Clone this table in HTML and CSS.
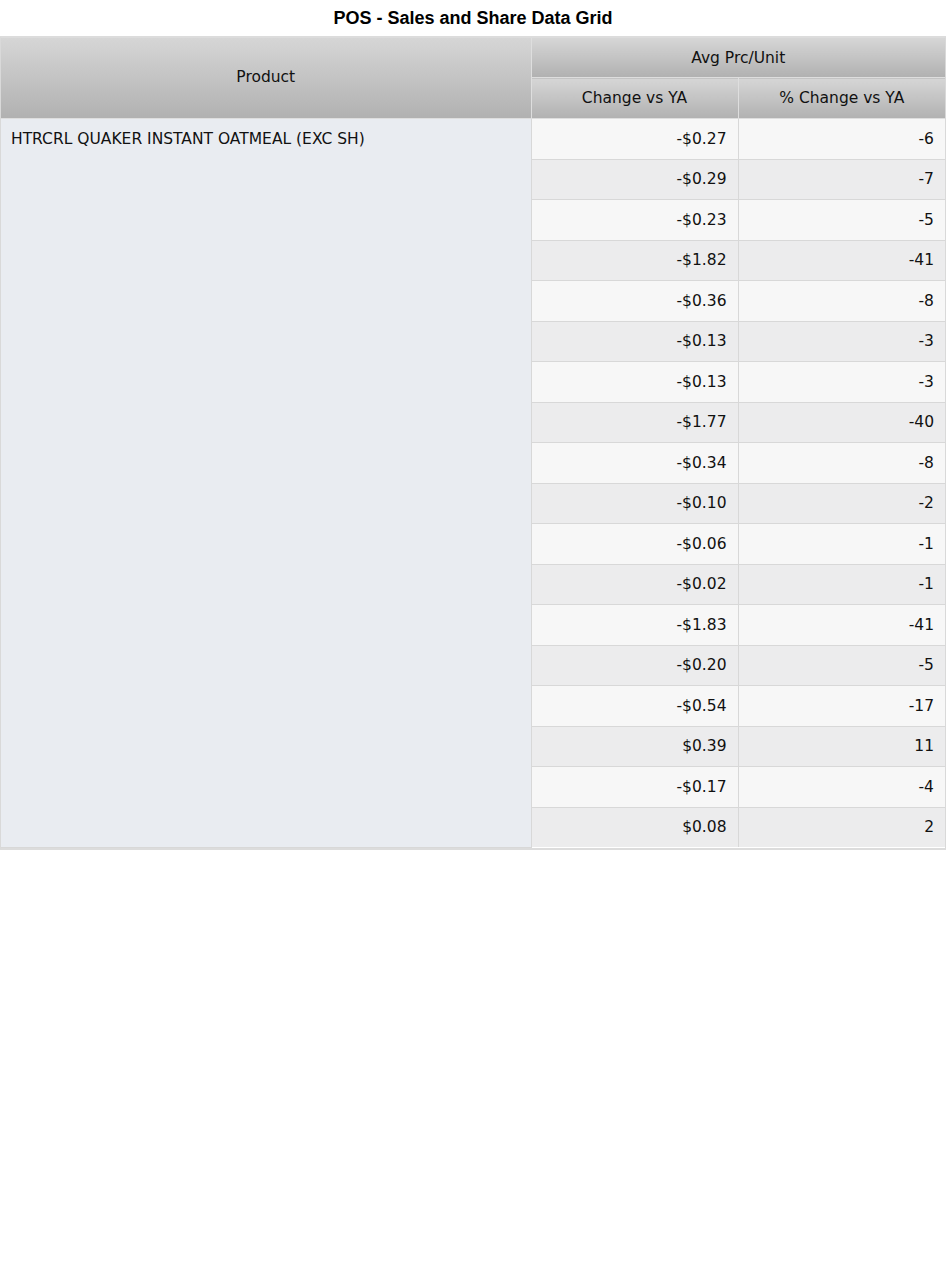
FILE: index.html
```html
<!DOCTYPE html>
<html>
<head>
<meta charset="utf-8">
<link rel="stylesheet" href="styles.css">
</head>
<body>
<h1 class="title">POS - Sales and Share Data Grid</h1>
<div class="grid-wrap">
<table class="grid">
<colgroup><col class="c-prod"><col class="c-val"><col class="c-val"></colgroup>
<thead>
<tr><th rowspan="2" class="h-prod">Product</th><th colspan="2" class="h-top">Avg Prc/Unit</th></tr>
<tr><th class="h-sub">Change vs YA</th><th class="h-sub">% Change vs YA</th></tr>
</thead>
<tbody>
<tr class="odd"><td rowspan="18" class="prod">HTRCRL QUAKER INSTANT OATMEAL (EXC SH)</td><td>-$0.27</td><td>-6</td></tr>
<tr class="even"><td>-$0.29</td><td>-7</td></tr>
<tr class="odd"><td>-$0.23</td><td>-5</td></tr>
<tr class="even"><td>-$1.82</td><td>-41</td></tr>
<tr class="odd"><td>-$0.36</td><td>-8</td></tr>
<tr class="even"><td>-$0.13</td><td>-3</td></tr>
<tr class="odd"><td>-$0.13</td><td>-3</td></tr>
<tr class="even"><td>-$1.77</td><td>-40</td></tr>
<tr class="odd"><td>-$0.34</td><td>-8</td></tr>
<tr class="even"><td>-$0.10</td><td>-2</td></tr>
<tr class="odd"><td>-$0.06</td><td>-1</td></tr>
<tr class="even"><td>-$0.02</td><td>-1</td></tr>
<tr class="odd"><td>-$1.83</td><td>-41</td></tr>
<tr class="even"><td>-$0.20</td><td>-5</td></tr>
<tr class="odd"><td>-$0.54</td><td>-17</td></tr>
<tr class="even"><td>$0.39</td><td>11</td></tr>
<tr class="odd"><td>-$0.17</td><td>-4</td></tr>
<tr class="even"><td>$0.08</td><td>2</td></tr>
</tbody>
</table>
</div>
</body>
</html>
```
FILE: styles.css
```css
html, body { margin: 0; padding: 0; background: #fff; }
body { font-family: "DejaVu Sans", Verdana, sans-serif; font-size: 15.5px; color: #111; }
.title {
  margin: 0;
  height: 36px;
  box-sizing: border-box;
  padding-top: 8px;
  text-align: center;
  font-family: "Liberation Sans", Arial, sans-serif;
  font-weight: bold;
  font-size: 18px;
  line-height: 21px;
  color: #000;
}
.grid-wrap {
  border: 1px solid #d9d9d9;
  border-top: 2px solid #dcdcdc;
  border-bottom: 2px solid #dcdcdc;
}
.grid {
  width: 100%;
  border-collapse: collapse;
  table-layout: fixed;
}
.c-prod { width: 530px; }
.grid th {
  font-weight: normal;
  color: #111;
  background: linear-gradient(#d6d6d6, #b1b1b1);
  border: 1px solid #dedede;
  border-top: 0;
  padding: 0;
  height: 39px;
}
.grid th.h-prod { border-left: 0; padding-bottom: 2px; }
.grid th.h-top { border-right: 0; }
.grid th.h-sub { height: 40px; }
.grid th.h-sub:last-child { border-right: 0; }
.grid td {
  border: 1px solid #d8d8d8;
  padding: 0 11px 0 8px;
  height: 39.5px;
  text-align: right;
  white-space: nowrap;
}
.grid tr td:last-child { border-right: 0; }
.grid tbody tr:last-child td { border-bottom: 0; }
.grid td.prod {
  text-align: left;
  vertical-align: top;
  padding: 11px 10px;
  background: #e9ecf1;
  border-left: 0;
}
.odd td { background: #f7f7f7; }
.even td { background: #ececed; }
```
